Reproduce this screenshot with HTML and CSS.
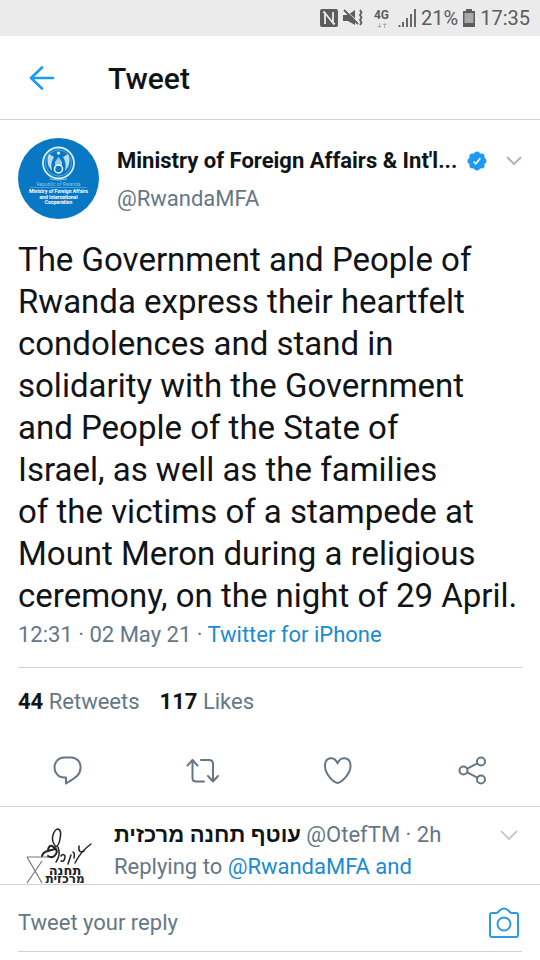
FILE: index.html
```html
<!DOCTYPE html>
<html lang="en">

<head>
    <meta charset="UTF-8">
    <meta name="viewport" content="width=device-width, initial-scale=1.0">
    <title>Tweet</title>
    <link rel="stylesheet" href="styles.css">
</head>

<body>
    <div class="status-bar">
        <svg class="nfc" width="18" height="18" viewBox="0 0 18 18">
            <rect width="18" height="18" rx="2" fill="#5c5c5c"/>
            <path d="M5 15V4L13 14V3M5 4L3 3M13 14l2 1" fill="none" stroke="#ebebeb" stroke-width="1.8"/>
        </svg>
        <svg class="mute" width="20" height="18" viewBox="0 0 20 18">
            <path d="M0 6h5l7-5v15l-7-4H0z" fill="#5c5c5c"/>
            <path d="M2 1l14 13" stroke="#ebebeb" stroke-width="1.2"/>
            <path d="M1 1l14 14" stroke="#5c5c5c" stroke-width="1.8"/>
            <path d="M17 1l1.500 2.500L17 6l1.500 2.500L17 11l1.500 2.500L17 16" fill="none" stroke="#5c5c5c" stroke-width="1.8"/>
        </svg>
        <div class="network">
            <span>4G</span>
            <svg width="10" height="5" viewBox="0 0 10 5">
                <path d="M2 0v3H0l2.500 2L5 3H3V0zM7 5V2H5.500L8 0l2 2H8v3z" fill="#b0b0b0"/>
            </svg>
        </div>
        <svg class="signal" width="18" height="18" viewBox="0 0 18 18">
            <path d="M1.500 18v-2M5 18v-5M9 18V9M13 18V5M17 18V0" stroke="#5c5c5c" stroke-width="1.800"/>
        </svg>
        <span class="status-text">21%</span>
        <svg class="battery" width="12" height="18" viewBox="0 0 12 18">
            <path d="M3 0h6v2h3v16H0V2h3z" fill="#5c5c5c"/>
            <rect x="1.500" y="4" width="9" height="10" fill="#a9a9a9"/>
        </svg>
        <span class="status-text">17:35</span>
    </div>

    <header class="top-bar">
        <button class="icon-btn" aria-label="Back">
            <svg width="26" height="26" viewBox="0 0 26 26" fill="none" stroke="#1d9bf0" stroke-width="2.600" stroke-linecap="round" stroke-linejoin="round">
                <path d="M24 12H2M13 1.500L2 12l11 10.500"/>
            </svg>
        </button>
        <h1>Tweet</h1>
    </header>

    <main>
        <article class="tweet">
            <div class="author">
                <svg class="avatar" viewBox="0 0 81 81" role="img" aria-label="Ministry of Foreign Affairs avatar">
                    <circle cx="40.500" cy="40.500" r="40.500" fill="#0878c4"/>
                    <circle cx="40.500" cy="25" r="15.500" fill="none" stroke="#d5ebf8" stroke-width="1.800"/>
                    <circle cx="40.500" cy="25" r="13" fill="none" stroke="#8ec3e6" stroke-width=".6"/>
                    <path d="M31 16q-3 6 0 13l3 4q-2-8 2-14zM50 16q3 6 0 13l-3 4q2-8-2-14z" fill="#b9dcf1"/>
                    <path d="M37 24l3.500-5 3.500 5v4h-7z" fill="#9dcbea"/>
                    <circle cx="40.500" cy="31" r="4" fill="none" stroke="#fff" stroke-width="1.500"/>
                    <circle cx="40.500" cy="15" r="1.500" fill="#fff"/>
                    <path d="M32 41q8 2 17 0" fill="none" stroke="#b9dcf1" stroke-width=".8"/>
                    <path d="M12 49.500h57" stroke="#5baade" stroke-width=".8"/>
                    <g class="avatar-text">
                        <text class="thin" x="40.500" y="48">Republic of Rwanda</text>
                        <text x="40.500" y="55">Ministry of Foreign Affairs</text>
                        <text x="40.500" y="61">and International</text>
                        <text x="40.500" y="66">Cooperation</text>
                    </g>
                </svg>
                <div class="names">
                    <div class="name-row">
                        <strong class="name">Ministry of Foreign Affairs &amp; Int'l...</strong>
                        <svg class="verified" width="20" height="20" viewBox="0 0 20 20">
                            <g fill="#1d9bf0">
                                <circle cx="10" cy="10" r="8"/>
                                <circle cx="10" cy="3.500" r="3"/><circle cx="14.600" cy="5.400" r="3"/>
                                <circle cx="16.500" cy="10" r="3"/><circle cx="14.600" cy="14.600" r="3"/>
                                <circle cx="10" cy="16.500" r="3"/><circle cx="5.400" cy="14.600" r="3"/>
                                <circle cx="3.500" cy="10" r="3"/><circle cx="5.400" cy="5.400" r="3"/>
                            </g>
                            <path d="M6.500 10.500l2.300 2.300 4.500-5.500" fill="none" stroke="#fff" stroke-width="1.600"/>
                        </svg>
                        <button class="icon-btn more" aria-label="More">
                            <svg width="16" height="10" viewBox="0 0 16 10" fill="none" stroke="#aab8b8" stroke-width="2">
                                <path d="M1 1l7 7 7-7"/>
                            </svg>
                        </button>
                    </div>
                    <a class="handle" href="#">@RwandaMFA</a>
                </div>
            </div>

            <p class="tweet-text">The Government and People of<br>
                Rwanda express their heartfelt<br>
                condolences and stand in<br>
                solidarity with the Government<br>
                and People of the State of<br>
                Israel, as well as the families<br>
                of the victims of a stampede at<br>
                Mount Meron during a religious<br>
                ceremony, on the night of 29 April.</p>

            <p class="meta">12:31 · 02 May 21 · <a href="#">Twitter for iPhone</a></p>

            <div class="counts">
                <span><b>44</b> Retweets</span>
                <span><b>117</b> Likes</span>
            </div>
        </article>

        <div class="actions">
            <button class="icon-btn" aria-label="Reply">
                <svg width="34" height="30" viewBox="0 0 34 30">
                    <path d="M13 2.500h8A9.500 9.500 0 0 1 29.500 13C29.500 20 24 23 15 28.500V22.500H13A9.500 10 0 0 1 13 2.500z"/>
                </svg>
            </button>
            <button class="icon-btn" aria-label="Retweet">
                <svg width="34" height="30" viewBox="0 0 34 30">
                    <path d="M1.500 10.500L6.500 5l5 5.500M6.500 5v18q0 3.500 3.500 3.500H18M15 5H23q4 0 4 4v17.500M22 21l5 5.500 5-5.500"/>
                </svg>
            </button>
            <button class="icon-btn" aria-label="Like">
                <svg width="34" height="30" viewBox="0 0 34 30">
                    <path d="M16.500 28C12 27 4 19 4 11 4 1 14 1 16.500 8.500 19 1 29.500 1 29.500 11 29.500 19 21 27 16.500 28z"/>
                </svg>
            </button>
            <button class="icon-btn" aria-label="Share">
                <svg width="34" height="30" viewBox="0 0 34 30">
                    <circle cx="7.500" cy="15.500" r="4"/><circle cx="25" cy="6.500" r="4"/><circle cx="25" cy="24.500" r="4"/>
                    <path d="M11.200 13.700l10.200-5.300M11.200 17.300l10.200 5.300"/>
                </svg>
            </button>
        </div>

        <article class="reply">
            <svg class="reply-avatar" width="78" height="61" viewBox="0 0 78 61" role="img" aria-label="OtefTM avatar">
                <g fill="none" stroke="#777" stroke-width="1.200">
                    <path d="M9 34h22M9 34l15 26M24 38L9 60"/>
                </g>
                <g fill="none" stroke="#222" stroke-width="1.500" stroke-linecap="round">
                    <path d="M38 24q-5-6-3-12 2-6 5-6 4 1 2 10-1 6-4 8"/>
                    <path d="M24 33q1-4 6-5l7-2q3 1 1 5-3 5-8 2M30 27q1-5 4-4l4 3" stroke-width="2"/>
                    <path d="M40 24q3 8-2 15M43 33q2-3 4 0 0 6-4 5"/>
                    <path d="M53 32l-3 9M55 29q2 1 1 6M73 21q-10 7-16 19M61 23q-1 8 5 5"/>
                </g>
                <g class="logo-text">
                    <text class="wide" x="47" y="52">תחנה</text>
                    <text x="47" y="60">מרכזית</text>
                </g>
            </svg>
            <div class="reply-body">
                <div class="name-row">
                    <p class="reply-name"><strong>עוטף תחנה מרכזית</strong> @OtefTM · 2h</p>
                    <button class="icon-btn more" aria-label="More">
                        <svg width="18" height="10" viewBox="0 0 18 10" fill="none" stroke="#b8bfc4" stroke-width="1.600">
                            <path d="M1 1l8 8 8-8"/>
                        </svg>
                    </button>
                </div>
                <p>Replying to <a href="#">@RwandaMFA and</a></p>
            </div>
        </article>
    </main>

    <form class="compose">
        <div class="compose-field">
            <input type="text" placeholder="Tweet your reply" aria-label="Tweet your reply">
            <button type="button" class="icon-btn" aria-label="Add photo">
                <svg width="32" height="32" viewBox="0 0 32 32" fill="none" stroke="#2a9be4" stroke-width="2" stroke-linejoin="round">
                    <path d="M4 6h4q2 0 3-2 5-5 10 0 1 2 3 2h4q2 0 2 2v20q0 2-2 2H4q-2 0-2-2V8q0-2 2-2z"/>
                    <circle cx="16" cy="17" r="6.500"/>
                </svg>
            </button>
        </div>
    </form>
</body>

</html>
```

FILE: styles.css
```css
* {
    box-sizing: border-box;
}

body {
    margin: 0;
    height: 100vh;
    display: flex;
    flex-direction: column;
    background-color: #fff;
    color: #111416;
    font-family: Roboto, "Liberation Sans", sans-serif;
    font-size: 22px;
    line-height: 32px;
}

h1,
p {
    margin: 0;
}

a {
    color: #1b8ad3;
    text-decoration: none;
}

svg {
    display: block;
    flex-shrink: 0;
}

.icon-btn {
    padding: 0;
    border: none;
    background: none;
    cursor: pointer;
}

/* status bar */
.status-bar {
    display: flex;
    align-items: center;
    justify-content: flex-end;
    flex-shrink: 0;
    gap: 5px;
    height: 36px;
    padding-right: 10px;
    background-color: #ebebeb;
    color: #5c5c5c;
}

.mute {
    margin-right: 6px;
}

.network {
    display: flex;
    flex-direction: column;
    align-items: center;
    gap: 2px;
    margin-right: 4px;
    font-size: 12px;
    font-weight: bold;
    line-height: 12px;
}

.status-text {
    font-size: 20px;
}

/* header */
.top-bar {
    display: flex;
    align-items: center;
    flex-shrink: 0;
    gap: 53px;
    height: 84px;
    padding: 2px 29px 0;
    border-bottom: 1px solid #d0d3d5;
}

.top-bar h1 {
    font-size: 30px;
    font-weight: 500;
}

/* tweet */
main {
    flex: 1;
    min-height: 0;
    overflow: hidden;
}

.tweet {
    padding: 18px 18px 0;
}

.author {
    display: flex;
    gap: 18px;
}

.avatar {
    width: 81px;
    height: 81px;
}

.avatar-text {
    fill: #fff;
    font-size: 5px;
    font-weight: bold;
    text-anchor: middle;
}

.avatar-text .thin {
    fill: #8ec3e6;
    font-weight: normal;
}

.names {
    flex: 1;
    min-width: 0;
    padding-top: 7px;
}

.name-row {
    display: flex;
    align-items: center;
}

.name {
    overflow: hidden;
    white-space: nowrap;
}

.verified {
    margin-left: 10px;
}

.more {
    margin-left: auto;
}

.handle {
    display: block;
    margin-top: 6px;
    color: #657786;
}

.tweet-text {
    margin-top: 20px;
    font-size: 33px;
    line-height: 42px;
}

.meta {
    margin-top: 2px;
    padding-bottom: 16px;
    border-bottom: 1px solid #d0d3d5;
    color: #657786;
}

.counts {
    display: flex;
    gap: 20px;
    padding: 18px 0;
    color: #657786;
}

.counts b {
    color: #111416;
}

.actions {
    display: flex;
    justify-content: space-around;
    padding: 19px 0 21px;
    border-bottom: 1px solid #d0d3d5;
}

.actions svg {
    fill: none;
    stroke: #657786;
    stroke-width: 2;
    stroke-linecap: round;
    stroke-linejoin: round;
}

/* reply */
.reply {
    display: flex;
    gap: 18px;
    padding: 12px 22px 0 18px;
    color: #657786;
}

.reply-avatar {
    margin-top: 4px;
}

.logo-text {
    fill: #222;
    font-family: "DejaVu Sans", sans-serif;
    font-size: 12px;
    font-weight: bold;
    text-anchor: middle;
}

.logo-text .wide {
    font-size: 13px;
}

.reply-body {
    flex: 1;
}

.reply-name strong {
    color: #111416;
}

/* compose */
.compose {
    flex-shrink: 0;
    padding: 0 18px 8px;
    border-top: 1px solid #d0d3d5;
}

.compose-field {
    display: flex;
    align-items: center;
    height: 67px;
    padding: 10px 2px 0 0;
    border-bottom: 1px solid #d0d3d5;
}

.compose-field input {
    flex: 1;
    min-width: 0;
    padding: 0;
    border: none;
    outline: none;
    font: inherit;
}

.compose-field input::placeholder {
    color: #657786;
}
```
